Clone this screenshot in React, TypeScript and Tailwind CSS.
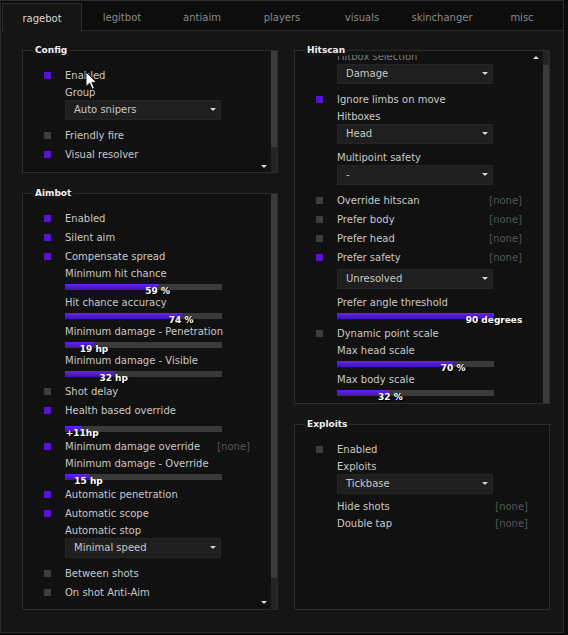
import type { ReactNode } from "react";

const tabs = ["ragebot", "legitbot", "antiaim", "players", "visuals", "skinchanger", "misc"];

function Arrow({ up }: { up?: boolean }) {
  return up ? (
    <span className="block h-0 w-0 border-x-[3px] border-b-[3px] border-x-transparent border-b-[#d8d8d8]" />
  ) : (
    <span className="block h-0 w-0 border-x-[3px] border-t-[3px] border-x-transparent border-t-[#d8d8d8]" />
  );
}

function Bind() {
  return <span className="ml-auto text-[#555555]">[none]</span>;
}

function Check({ label, on, bind }: { label: string; on?: boolean; bind?: boolean }) {
  return (
    <div className="flex h-[19px] items-center pl-[21px] pr-[21px]">
      <span className={`h-[7px] w-[7px] ${on ? "bg-[#5514d6]" : "bg-[#3d3d3d]"}`} />
      <span className="ml-[14px]">{label}</span>
      {bind && <Bind />}
    </div>
  );
}

function Label({ text, dim }: { text: string; dim?: boolean }) {
  return (
    <div className={`flex h-[15px] items-center pl-[42px] ${dim ? "text-[#7c7c7c]" : ""}`}>{text}</div>
  );
}

function Text({ label }: { label: string }) {
  return (
    <div className="flex h-[17px] items-center pl-[42px] pr-[21px]">
      <span>{label}</span>
      <Bind />
    </div>
  );
}

function Drop({ value, top, tight }: { value: string; top?: boolean; tight?: boolean }) {
  return (
    <div
      className={`relative ml-[42px] flex h-[20px] w-[156px] items-center border border-[#252525] bg-[#1f1f1f] pl-[8px] ${
        top ? "mt-[2px]" : ""
      } ${tight ? "mb-[4px]" : "mb-[6px]"}`}
    >
      {value}
      <span className="absolute right-[4px] top-[7px]">
        <Arrow />
      </span>
    </div>
  );
}

function Slider({ label, frac, value }: { label?: string; frac: number; value: string }) {
  return (
    <div className={label ? "pb-[5px]" : "pb-[5px] pt-[6px]"}>
      {label && <div className="flex h-[16px] items-center pl-[42px]">{label}</div>}
      <div className={`relative ml-[42px] h-[6px] w-[157px] bg-[#3a3a3a] ${label ? "mt-[2px]" : ""}`}>
        <div
          className="h-full bg-gradient-to-b from-[#6424ec] to-[#4210b4]"
          style={{ width: `${frac * 100}%` }}
        />
        <span
          className="absolute top-[1px] -translate-x-1/2 whitespace-nowrap text-[9px] font-bold leading-[12px] text-white [text-shadow:1px_1px_0_#000]"
          style={{ left: `${frac * 100}%` }}
        >
          {value}
        </span>
      </div>
    </div>
  );
}

function Group({
  title,
  box,
  view = "pt-[15px]",
  bar,
  arrow,
  children,
}: {
  title: string;
  box: string;
  view?: string;
  bar?: ReactNode;
  arrow?: ReactNode;
  children: ReactNode;
}) {
  return (
    <div className={`relative border border-[#2c2c2c] bg-[#111111] ${box}`}>
      <div className="flex h-full">
        <div className={`min-w-0 flex-1 overflow-hidden ${view}`}>{children}</div>
        {bar}
      </div>
      {arrow}
      <span className="absolute -top-[7px] left-[10px] bg-[#151515] px-[2px] text-[9px] font-bold leading-[12px] text-[#f0f0f0]">
        {title}
      </span>
    </div>
  );
}

function Cursor() {
  return (
    <svg className="absolute left-[85px] top-[71px]" width="13" height="20" viewBox="0 0 13 20">
      <path d="M1 1 L1 15.5 L4.6 12.2 L7.2 18.2 L9.4 17.2 L6.9 11.4 L11.6 11.4 Z" fill="#fff" stroke="#111" strokeWidth="1" />
    </svg>
  );
}

export default function App() {
  return (
    <div className="relative h-[635px] w-[568px] bg-[#0b0b0b] font-['DejaVu_Sans',sans-serif] text-[10px] leading-none text-[#c8c8c8]">
      <div className="h-[633px] w-[564px] border border-[#2a2a2a] bg-[#151515]">
        <div className="flex h-[30px] border-b border-[#2a2a2a] bg-[#0d0d0d] pl-[1px]">
          {tabs.map((t, i) =>
            i === 0 ? (
              <div
                key={t}
                className="mt-[2px] -mb-[1px] flex h-[29px] w-[80px] items-center justify-center border-x border-t border-[#2c2c2c] bg-[#151515] pt-[2px] text-[#d6d6d6]"
              >
                {t}
              </div>
            ) : (
              <div key={t} className="flex w-[80px] items-center justify-center pt-[4px] text-[#8a8a8a]">
                {t}
              </div>
            )
          )}
        </div>

        <div className="flex gap-[16px] pl-[21px] pt-[19px]">
          <div className="flex w-[256px] flex-col gap-[20px]">
            <Group
              title="Config"
              box="h-[123px]"
              bar={
                <div className="flex w-[6px] flex-col bg-[#242424]">
                  <div className="h-[96px] bg-[#3a3a3a]" />
                </div>
              }
              arrow={
                <span className="absolute bottom-[4px] right-[10px]">
                  <Arrow />
                </span>
              }
            >
              <Check label="Enabled" on />
              <Label text="Group" />
              <Drop value="Auto snipers" />
              <Check label="Friendly fire" />
              <Check label="Visual resolver" on />
            </Group>

            <Group
              title="Aimbot"
              box="h-[417px]"
              bar={
                <div className="flex w-[6px] flex-col bg-[#242424]">
                  <div className="h-[384px] bg-[#3a3a3a]" />
                </div>
              }
              arrow={
                <span className="absolute bottom-[5px] right-[10px]">
                  <Arrow />
                </span>
              }
            >
              <Check label="Enabled" on />
              <Check label="Silent aim" on />
              <Check label="Compensate spread" on />
              <Slider label="Minimum hit chance" frac={0.59} value="59 %" />
              <Slider label="Hit chance accuracy" frac={0.74} value="74 %" />
              <Slider label="Minimum damage - Penetration" frac={0.185} value="19 hp" />
              <Slider label="Minimum damage - Visible" frac={0.31} value="32 hp" />
              <Check label="Shot delay" />
              <Check label="Health based override" on />
              <Slider frac={0.11} value="+11hp" />
              <Check label="Minimum damage override" on bind />
              <Slider label="Minimum damage - Override" frac={0.15} value="15 hp" />
              <Check label="Automatic penetration" on />
              <Check label="Automatic scope" on />
              <Label text="Automatic stop" />
              <Drop value="Minimal speed" />
              <Check label="Between shots" />
              <Check label="On shot Anti-Aim" />
            </Group>
          </div>

          <div className="flex w-[256px] flex-col gap-[20px]">
            <Group
              title="Hitscan"
              box="h-[354px]"
              view="mt-[4px]"
              bar={
                <div className="flex w-[6px] flex-col bg-[#242424]">
                  <div className="h-[14px]" />
                  <div className="flex-1 bg-[#3a3a3a]" />
                </div>
              }
              arrow={
                <span className="absolute right-[10px] top-[5px]">
                  <Arrow up />
                </span>
              }
            >
              <div className="-mt-[6px]">
                <Label text="Hitbox selection" dim />
                <Drop value="Damage" />
                <Check label="Ignore limbs on move" on />
                <Label text="Hitboxes" />
                <Drop value="Head" />
                <Label text="Multipoint safety" />
                <Drop value="-" />
                <Check label="Override hitscan" bind />
                <Check label="Prefer body" bind />
                <Check label="Prefer head" bind />
                <Check label="Prefer safety" on bind />
                <Drop value="Unresolved" top />
                <Slider label="Prefer angle threshold" frac={1} value="90 degrees" />
                <Check label="Dynamic point scale" />
                <Slider label="Max head scale" frac={0.74} value="70 %" />
                <Slider label="Max body scale" frac={0.34} value="32 %" />
              </div>
            </Group>

            <Group title="Exploits" box="h-[186px]">
              <Check label="Enabled" />
              <Label text="Exploits" />
              <Drop value="Tickbase" tight />
              <Text label="Hide shots" />
              <Text label="Double tap" />
            </Group>
          </div>
        </div>
      </div>
      <Cursor />
    </div>
  );
}
